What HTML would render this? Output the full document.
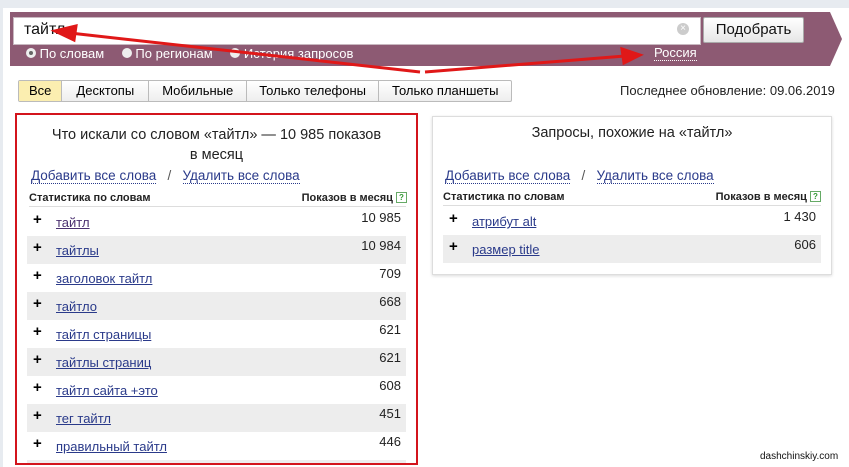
<!DOCTYPE html>
<html><head><meta charset="utf-8"><style>
body{margin:0;width:849px;height:467px;overflow:hidden;background:#fff;font-family:"Liberation Sans",sans-serif;position:relative}
.a{position:absolute}
.dot{color:#2a3a8a;border-bottom:1px dotted #2a3a8a;text-decoration:none}
.row{position:absolute;left:0;right:0;height:28px;font-size:13px}
.row.g{background:#ededed}
.row .p{position:absolute;left:6px;top:3px;font-weight:bold;font-size:15px}
.row .w{position:absolute;left:29px;top:7px;color:#2a3a8a;text-decoration:underline}
.row .n{position:absolute;right:5px;top:2px;color:#222}
.q{display:inline-block;width:9px;height:9px;border:1px solid #6a6;font-size:8px;line-height:9px;text-align:center;color:#393;vertical-align:1px}
</style></head><body>
<div class="a" style="left:0;top:0;width:849px;height:8px;background:#e7ebf0"></div>
<div class="a" style="left:0;top:0;width:3px;height:467px;background:#e7ebf0"></div>
<svg class="a" style="left:10px;top:12px" width="835" height="54"><polygon points="0,0 820,0 832,27 820,54 0,54" fill="#8d5a73"/></svg>
<div class="a" style="left:13px;top:17px;width:686px;height:26px;background:#fff;border:1px solid #c8b8c0"></div>
<div class="a" style="left:24px;top:21px;font-size:16px;color:#111">тайтл</div>
<div class="a" style="left:677px;top:23px;width:12px;height:12px;border-radius:50%;background:#ccc;color:#fff;font-size:10px;line-height:12px;text-align:center">×</div>
<div class="a" style="left:703px;top:17px;width:99px;height:24px;background:linear-gradient(#fff,#e6e6e6);border:1px solid #aaa;border-radius:2px;font-size:15px;text-align:center;line-height:24px;color:#111">Подобрать</div>
<div class="a" style="left:26px;top:46px;font-size:13px;color:#fff;white-space:nowrap">
<span style="display:inline-block;width:10px;height:10px;border-radius:50%;border:3px solid #eee;box-sizing:border-box;background:#666"></span> По словам
<span style="display:inline-block;width:10px;height:10px;border-radius:50%;background:#eee;margin-left:14px"></span> По регионам
<span style="display:inline-block;width:10px;height:10px;border-radius:50%;background:#eee;margin-left:14px"></span> История запросов</div>
<div class="a" style="left:654px;top:45px;font-size:13px;color:#fff;border-bottom:1px dotted #fff">Россия</div>
<svg class="a" style="left:0;top:0" width="849" height="90"><g stroke="#e01818" stroke-width="3" fill="#e01818"><line x1="420" y1="72" x2="70" y2="33"/><polygon points="55,31 76,26 74,40"/><line x1="425" y1="72" x2="625" y2="56"/><polygon points="640,55 622,49 624,63"/></g></svg>
<div class="a" style="left:18px;top:80px;height:20px;border:1px solid #bbb;border-radius:2px;display:flex;font-size:13px;line-height:20px;background:linear-gradient(#fff,#eee)">
<span style="padding:0 10px;background:#fbeeb0;border-right:1px solid #bbb">Все</span><span style="padding:0 14px;border-right:1px solid #bbb">Десктопы</span><span style="padding:0 13px;border-right:1px solid #bbb">Мобильные</span><span style="padding:0 12px;border-right:1px solid #bbb">Только телефоны</span><span style="padding:0 13px">Только планшеты</span></div>
<div class="a" style="left:620px;top:83px;font-size:13px;color:#222">Последнее обновление: 09.06.2019</div>

<div class="a" style="left:15px;top:113px;width:399px;height:348px;border:2px solid #d3141c;overflow:hidden">
<div class="a" style="left:0;width:399px;top:10px;text-align:center;font-size:14.5px;line-height:20px;color:#222">Что искали со словом «тайтл» — 10 985 показов<br>в месяц</div>
<div class="a" style="left:14px;top:53px;font-size:13.5px;color:#555"><span class="dot">Добавить все слова</span> &nbsp; / &nbsp; <span class="dot">Удалить все слова</span></div>
<div class="a" style="left:12px;right:10px;top:77px;height:14px;border-bottom:1px solid #ddd;font-size:11px;font-weight:bold;color:#222">Статистика по словам<span style="float:right;margin-right:-1px">Показов в месяц <span class="q">?</span></span></div>
<div class="a" style="left:10px;right:10px;top:93px;height:260px">
<div class="row" style="top:0"><span class="p">+</span><span class="w" style="color:#4a3070">тайтл</span><span class="n">10 985</span></div>
<div class="row g" style="top:28px"><span class="p">+</span><span class="w">тайтлы</span><span class="n">10 984</span></div>
<div class="row" style="top:56px"><span class="p">+</span><span class="w">заголовок тайтл</span><span class="n">709</span></div>
<div class="row g" style="top:84px"><span class="p">+</span><span class="w">тайтло</span><span class="n">668</span></div>
<div class="row" style="top:112px"><span class="p">+</span><span class="w">тайтл страницы</span><span class="n">621</span></div>
<div class="row g" style="top:140px"><span class="p">+</span><span class="w">тайтлы страниц</span><span class="n">621</span></div>
<div class="row" style="top:168px"><span class="p">+</span><span class="w">тайтл сайта +это</span><span class="n">608</span></div>
<div class="row g" style="top:196px"><span class="p">+</span><span class="w">тег тайтл</span><span class="n">451</span></div>
<div class="row" style="top:224px"><span class="p">+</span><span class="w">правильный тайтл</span><span class="n">446</span></div>
<div class="row g" style="top:252px"></div>
</div></div>

<div class="a" style="left:432px;top:116px;width:398px;height:157px;border:1px solid #ddd;box-shadow:0 1px 3px rgba(0,0,0,.15)">
<div class="a" style="left:0;width:398px;top:8px;text-align:center;font-size:14.5px;color:#222">Запросы, похожие на «тайтл»</div>
<div class="a" style="left:12px;top:51px;font-size:13.5px;color:#555"><span class="dot">Добавить все слова</span> &nbsp; / &nbsp; <span class="dot">Удалить все слова</span></div>
<div class="a" style="left:10px;right:10px;top:74px;height:14px;border-bottom:1px solid #ddd;font-size:11px;font-weight:bold;color:#222">Статистика по словам<span style="float:right">Показов в месяц <span class="q">?</span></span></div>
<div class="a" style="left:10px;right:10px;top:90px;height:56px">
<div class="row" style="top:0"><span class="p">+</span><span class="w">атрибут alt</span><span class="n">1 430</span></div>
<div class="row g" style="top:28px"><span class="p">+</span><span class="w">размер title</span><span class="n">606</span></div>
</div></div>
<div class="a" style="left:760px;top:451px;font-size:10px;color:#111">dashchinskiy.com</div>
</body></html>
